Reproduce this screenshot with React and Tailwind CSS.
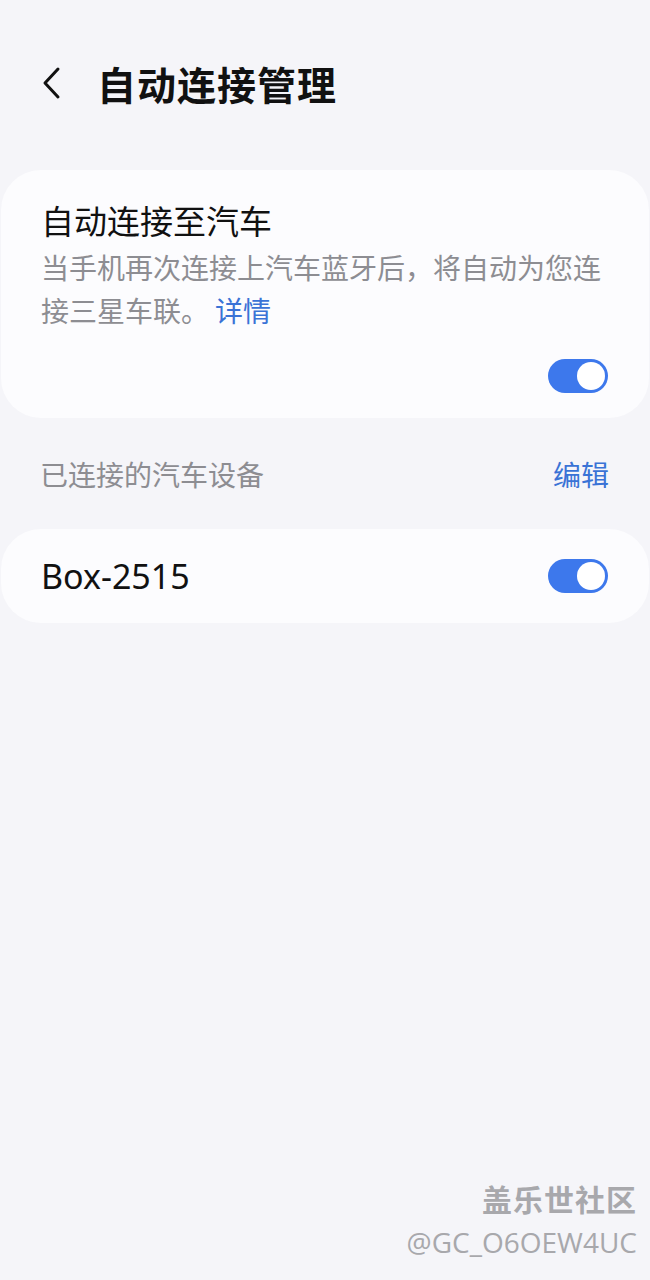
import React from "react";

const font = { fontFamily: '"Noto Sans CJK SC", "Noto Sans", sans-serif' };

const Toggle = () => (
  <div className="w-[60px] h-[34px] rounded-full bg-[#3d78ec] flex items-center justify-end pr-[3px]">
    <div className="w-[28px] h-[28px] rounded-full bg-white" />
  </div>
);

export default function App() {
  return (
    <div className="w-[650px] h-[1280px] bg-[#f5f5f9] flex flex-col" style={font}>
      {/* Header */}
      <header className="flex items-center h-[90px] mt-[38px] pl-[40px]">
        <svg width="24" height="34" viewBox="0 0 24 34" className="mr-[33px]">
          <path d="M18 3 L5 17 L18 31" fill="none" stroke="#111" strokeWidth="3" strokeLinecap="round" strokeLinejoin="round" />
        </svg>
        <h1 className="text-[39px] font-bold text-[#111] leading-none tracking-[1px]">自动连接管理</h1>
      </header>

      {/* Auto connect card */}
      <div className="mt-[42px] mx-[1px] bg-[#fcfcfe] rounded-[40px] px-[40px] pt-[27px] pb-[25px]">
        <p className="text-[33px] text-[#111] leading-[46px]">自动连接至汽车</p>
        <p className="text-[28px] text-[#8d8d92] leading-[43px] mt-[3px]">
          当手机再次连接上汽车蓝牙后，将自动为您连接三星车联。
          <span className="text-[#3a73d6] ml-[6px]">详情</span>
        </p>
        <div className="flex justify-end mt-[27px] mr-[1px]">
          <Toggle />
        </div>
      </div>

      {/* Section label */}
      <div className="flex items-center justify-between pl-[40px] pr-[41px] h-[111px]">
        <span className="text-[28px] text-[#8d8d92]">已连接的汽车设备</span>
        <span className="text-[28px] text-[#3a73d6]">编辑</span>
      </div>

      {/* Device card */}
      <div className="mx-[1px] bg-[#fcfcfe] rounded-[40px] h-[94px] pl-[40px] pr-[41px] flex items-center justify-between">
        <span className="text-[34px] text-[#111]" style={{ fontFamily: '"Noto Sans", sans-serif' }}>Box-2515</span>
        <Toggle />
      </div>

      <div className="flex-1" />

      {/* Watermark */}
      <div className="flex flex-col items-end pr-[13px] pb-[18px] text-[#a8a8ac]">
        <span className="text-[30px] font-bold leading-[40px] tracking-[1px]">盖乐世社区</span>
        <span className="text-[28px] leading-[40px] mt-[4px]" style={{ fontFamily: '"Open Sans", sans-serif' }}>@GC_O6OEW4UC</span>
      </div>
    </div>
  );
}
